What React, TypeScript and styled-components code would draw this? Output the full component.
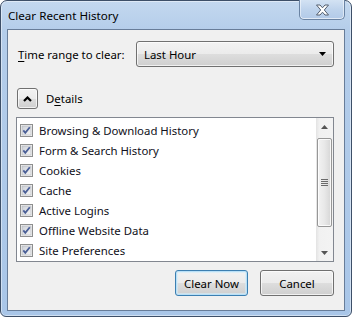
import styled, { createGlobalStyle } from 'styled-components';

const GlobalStyle = createGlobalStyle`
  html, body {
    margin: 0;
    padding: 0;
  }

  body {
    font-family: "Noto Sans", "Open Sans", sans-serif;
    font-size: 11.4px;
    color: #000;
  }
`;

const Window = styled.div`
  box-sizing: border-box;
  display: flex;
  flex-direction: column;
  width: 352px;
  height: 317px;
  padding: 0 6px 5px;
  border: 1px solid #3d4f68;
  border-radius: 7px 7px 6px 6px;
  background: linear-gradient(180deg, #c3d8ef 0%, #b4cdea 30px, #a9c6e8 100%);
  box-shadow: inset 0 0 0 1px rgba(255, 255, 255, 0.45);
`;

const TitleBar = styled.div`
  display: flex;
  justify-content: space-between;
  align-items: flex-start;
  height: 28px;
  flex-shrink: 0;
`;

const Title = styled.span`
  padding-left: 1px;
  line-height: 29px;
  font-size: 11.6px;
  color: #000;
`;

const CloseButton = styled.div`
  display: flex;
  align-items: center;
  justify-content: center;
  box-sizing: border-box;
  width: 46px;
  height: 20px;
  margin-top: -1px;
  padding-top: 1px;
  border: 1px solid #6a83a3;
  border-top: none;
  border-radius: 0 0 5px 5px;
  background: linear-gradient(180deg, #d3e2f3 0%, #bed3ec 50%, #b2cae8 100%);
  box-shadow: inset 0 -1px 0 rgba(255, 255, 255, 0.6), inset 1px 0 0 rgba(255, 255, 255, 0.5), inset -1px 0 0 rgba(255, 255, 255, 0.5);
`;

const Client = styled.div`
  display: flex;
  flex: 1;
  flex-direction: column;
  padding: 11px 10px 14px 8px;
  border: 1px solid #687d99;
  background: #f0f0f0;
`;

const RangeRow = styled.div`
  display: flex;
  align-items: center;
  justify-content: space-between;
  height: 26px;
`;

const Label = styled.span`
  margin-left: 2px;

  u {
    text-decoration: underline;
    text-underline-offset: 2px;
  }
`;

const Combo = styled.div`
  box-sizing: border-box;
  display: flex;
  align-items: center;
  justify-content: space-between;
  width: 198px;
  height: 26px;
  padding: 0 7px 0 7px;
  border: 1px solid #707070;
  border-radius: 3px;
  background: linear-gradient(180deg, #f2f2f2 0%, #ebebeb 50%, #dddddd 51%, #cfcfcf 100%);
  box-shadow: inset 0 0 0 1px rgba(255, 255, 255, 0.7);
`;

const DetailsRow = styled.div`
  display: flex;
  align-items: center;
  gap: 6px;
  margin-top: 21px;
  height: 21px;
`;

const SquareButton = styled.div`
  box-sizing: border-box;
  display: flex;
  align-items: center;
  justify-content: center;
  width: 21px;
  height: 21px;
  margin-left: 1px;
  border: 1px solid #707070;
  border-radius: 3px;
  background: linear-gradient(180deg, #f2f2f2 0%, #ebebeb 50%, #dddddd 51%, #cfcfcf 100%);
  box-shadow: inset 0 0 0 1px rgba(255, 255, 255, 0.7);
`;

const ListBox = styled.div`
  box-sizing: border-box;
  display: flex;
  height: 145px;
  margin-top: 8px;
  border: 1px solid #828790;
  background: #fff;
`;

const Items = styled.div`
  flex: 1;
  padding-top: 2px;
`;

const Item = styled.div`
  display: flex;
  align-items: center;
  gap: 6px;
  height: 20px;
  padding-left: 3px;
  color: #101020;
`;

const ScrollBar = styled.div`
  display: flex;
  flex-direction: column;
  width: 17px;
  background: linear-gradient(90deg, #e3e3e3 0%, #f1f1f1 20%, #f3f3f3 100%);
`;

const ArrowCell = styled.div`
  display: flex;
  align-items: center;
  justify-content: center;
  height: 17px;
`;

const Track = styled.div`
  flex: 1;
  display: flex;
  flex-direction: column;
  padding: 3px 1px 0;
`;

const Thumb = styled.div`
  box-sizing: border-box;
  display: flex;
  align-items: center;
  justify-content: center;
  height: 89px;
  border: 1px solid #979797;
  border-radius: 2px;
  background: linear-gradient(90deg, #f3f3f3 0%, #e8e8e8 50%, #d6d6d6 100%);
  box-shadow: inset 0 0 0 1px rgba(255, 255, 255, 0.8);
`;

const ButtonRow = styled.div`
  display: flex;
  justify-content: flex-end;
  gap: 12px;
  margin-top: 8px;
`;

const DialogButton = styled.div<{ $default?: boolean }>`
  box-sizing: border-box;
  display: flex;
  align-items: center;
  justify-content: center;
  width: ${({ $default }) => ($default ? '73px' : '74px')};
  height: 26px;
  border: 1px solid ${({ $default }) => ($default ? '#3c7fb1' : '#707070')};
  border-radius: 3px;
  background: linear-gradient(180deg, #f2f2f2 0%, #ebebeb 50%, #dddddd 51%, #cfcfcf 100%);
  box-shadow: ${({ $default }) =>
    $default ? 'inset 0 0 0 1px #b9e0f7, inset 0 0 0 2px rgba(210, 236, 250, 0.6)' : 'inset 0 0 0 1px rgba(255, 255, 255, 0.7)'};
`;

const CloseGlyph = () => (
  <svg width="15" height="12" viewBox="0 0 15 12">
    <path
      d="M1.5 1 H5 L7.5 3.8 L10 1 H13.5 L9.3 6 L13.5 11 H10 L7.5 8.2 L5 11 H1.5 L5.7 6 Z"
      fill="#fff"
      stroke="#535e6e"
      strokeWidth="1"
      strokeLinejoin="round"
    />
  </svg>
);

const Check = () => (
  <svg width="13" height="13" viewBox="0 0 13 13">
    <defs>
      <linearGradient id="cbfill" x1="0" y1="0" x2="1" y2="1">
        <stop offset="0" stopColor="#cbcfd5" />
        <stop offset="1" stopColor="#f6f6f6" />
      </linearGradient>
    </defs>
    <rect x="0.5" y="0.5" width="12" height="12" fill="#f4f4f4" stroke="#8e8f8f" />
    <rect x="2" y="2" width="9" height="9" fill="url(#cbfill)" stroke="#aeb3b9" strokeWidth="0.6" />
    <path d="M3.3 6.4 L5.3 8.9 L9.8 3.2" fill="none" stroke="#4a5f97" strokeWidth="1.8" />
  </svg>
);

const items = [
  'Browsing & Download History',
  'Form & Search History',
  'Cookies',
  'Cache',
  'Active Logins',
  'Offline Website Data',
  'Site Preferences',
];

export default function App() {
  return (
    <>
      <GlobalStyle />
      <Window>
        <TitleBar>
          <Title>Clear Recent History</Title>
          <CloseButton>
            <CloseGlyph />
          </CloseButton>
        </TitleBar>
        <Client>
          <RangeRow>
            <Label>
              <u>T</u>ime range to clear:
            </Label>
            <Combo>
              <span>Last Hour</span>
              <svg width="7" height="4" viewBox="0 0 7 4">
                <path d="M0 0 H7 L3.5 4 Z" fill="#000" />
              </svg>
            </Combo>
          </RangeRow>
          <DetailsRow>
            <SquareButton>
              <svg width="9" height="6" viewBox="0 0 9 6">
                <path d="M1 5 L4.5 1.5 L8 5" fill="none" stroke="#000" strokeWidth="2.2" />
              </svg>
            </SquareButton>
            <Label>
              D<u>e</u>tails
            </Label>
          </DetailsRow>
          <ListBox>
            <Items>
              {items.map((name) => (
                <Item key={name}>
                  <Check />
                  <span>{name}</span>
                </Item>
              ))}
            </Items>
            <ScrollBar>
              <ArrowCell>
                <svg width="7" height="4" viewBox="0 0 7 4">
                  <path d="M0 4 H7 L3.5 0 Z" fill="#555" />
                </svg>
              </ArrowCell>
              <Track>
                <Thumb>
                  <svg width="7" height="8" viewBox="0 0 7 8">
                    <path d="M0 0.5 H7 M0 2.5 H7 M0 4.5 H7 M0 6.5 H7" stroke="#6a6a6a" strokeWidth="1" />
                  </svg>
                </Thumb>
              </Track>
              <ArrowCell>
                <svg width="7" height="4" viewBox="0 0 7 4">
                  <path d="M0 0 H7 L3.5 4 Z" fill="#555" />
                </svg>
              </ArrowCell>
            </ScrollBar>
          </ListBox>
          <ButtonRow>
            <DialogButton $default>Clear Now</DialogButton>
            <DialogButton>Cancel</DialogButton>
          </ButtonRow>
        </Client>
      </Window>
    </>
  );
}
